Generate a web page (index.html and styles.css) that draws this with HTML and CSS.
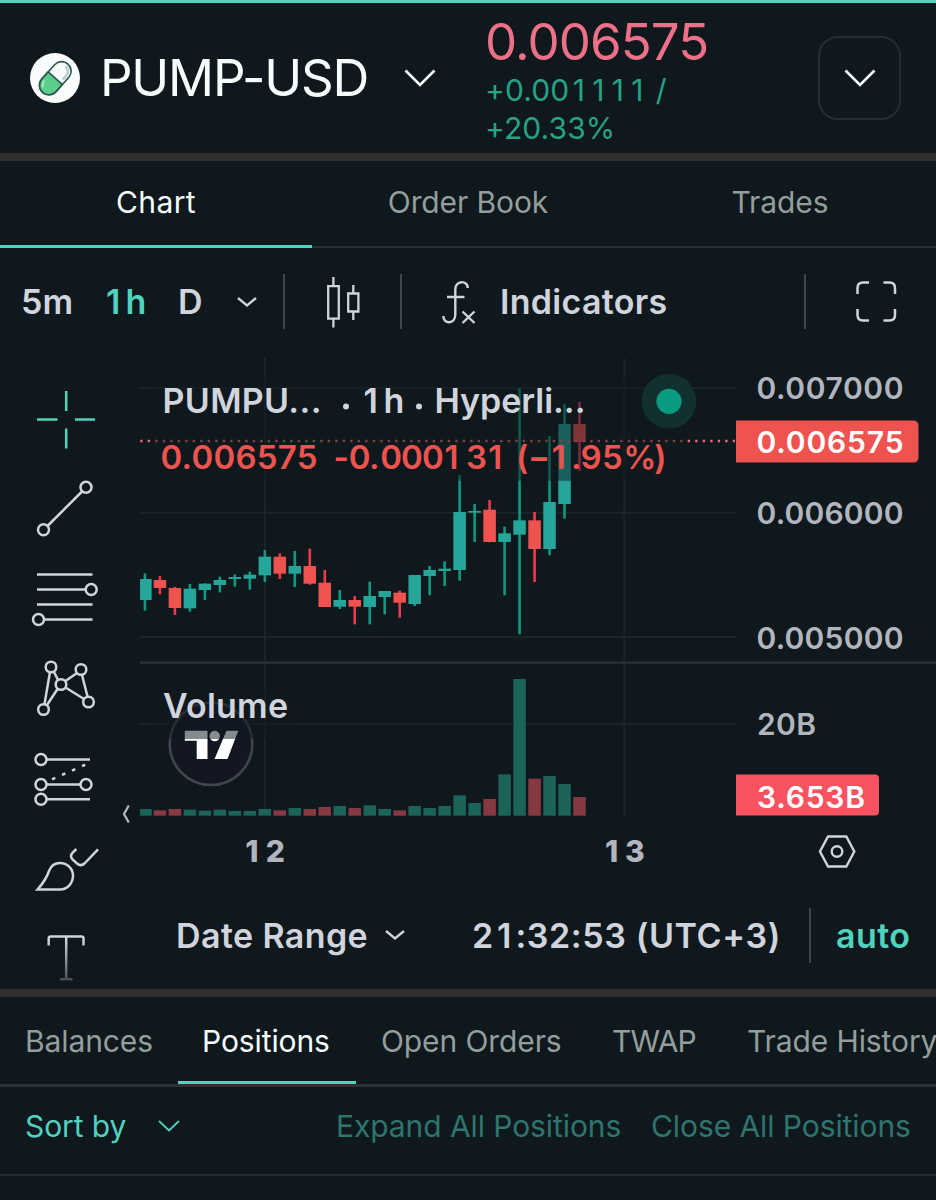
FILE: index.html
```html
<!DOCTYPE html>
<html lang="en">
<head>
<meta charset="utf-8">
<title>PUMP-USD</title>
<link rel="stylesheet" href="styles.css">
</head>
<body>
<div class="app">
  <header class="market">
    <svg class="coin" viewBox="0 0 50 50">
      <circle cx="25" cy="25" r="25" fill="#fbfdfd"/>
      <g transform="translate(25.3 25.2) rotate(-48)">
        <rect x="-19" y="-9.5" width="38" height="19" rx="9.5" fill="#f6fafa" stroke="#2c5450" stroke-width="1.6"/>
        <path d="M0-9.5H-9.5a9.5 9.5 0 0 0 0 19H0z" fill="#5cce8c" stroke="#2c5450" stroke-width="1.6"/>
        <path d="M4 6.5H9a7 7 0 0 0 7-7" fill="none" stroke="#bccdd0" stroke-width="2.6"/>
        <path d="M-15-3A7 7 0 0 1-9-6.5" fill="none" stroke="#9be8b9" stroke-width="2"/>
      </g>
    </svg>
    <h1 class="pair">PUMP-USD</h1>
    <svg class="pair-arrow" viewBox="0 0 32 18"><path d="M1.5 1.5 16 16 30.500 1.5"/></svg>
    <div class="quote">
      <div class="price">0.006575</div>
      <div class="change"><span>+0.00<span class="ones">1111</span> /</span><br><span>+20.33%</span></div>
    </div>
    <button class="more"><svg viewBox="0 0 32 18"><path d="M1.500 1.500 16 16 30.500 1.500"/></svg></button>
  </header>

  <nav class="views">
    <a class="view active">Chart</a>
    <a class="view">Order Book</a>
    <a class="view">Trades</a>
  </nav>

  <section class="chart">
    <div class="toolbar">
      <span class="tf m5">5m</span>
      <span class="tf h1 on"><span class="one">1</span>h</span>
      <span class="tf d1">D</span>
      <svg class="tf-arrow" viewBox="0 0 20 10"><path d="M1 1 10 8.500 19 1"/></svg>
      <i class="rule r1"></i>
      <svg class="candles-icon" viewBox="326 275 36 52"><path d="M333.400 276v8M333.400 318.500v8M328.200 285.200h10.600v32.500h-10.600zM353.300 284v7.500M353.300 311v8M348.200 292.500h10.200v18h-10.200z"/></svg>
      <i class="rule r2"></i>
      <svg class="fx-icon" viewBox="440 276 38 48"><path d="M443.300 314c0 8.500 12 8.500 12-1.500V287.500c0-9.500 12.500-9.500 12.500-1.500M447 295h17.500M462.500 309.500l12 11.500M474.500 309.500l-12 11.500"/></svg>
      <span class="indicators">Indicators</span>
      <i class="rule r3"></i>
      <svg class="full-icon" viewBox="855 280 43 43"><path d="M857.500 294v-6q0-5.500 5.500-5.500h6M883.500 282.500h6q5.500 0 5.500 5.500v6M895 309v6q0 5.500-5.500 5.500h-6M869 320.500h-6q-5.500 0-5.500-5.500v-6"/></svg>
    </div>

    <div class="workspace">
      <div class="tools">
        <svg class="tool on" viewBox="0 375 120 90"><path d="M66.200 391v20M66.200 428.500v20M37 419.500h20.500M75 419.500h20"/></svg>
        <svg class="tool" viewBox="0 465 120 90"><path d="M47.500 526 82 491.500"/><circle cx="43.500" cy="529.800" r="5.500"/><circle cx="86" cy="487.200" r="5.500"/></svg>
        <svg class="tool" viewBox="0 555 120 90"><path d="M37 574.500h55.500M37 589.500h48.500M37 604.500h55.500M44 619.500h48.500"/><circle cx="91.200" cy="589.500" r="5.500"/><circle cx="38.500" cy="619.500" r="5.500"/></svg>
        <svg class="tool" viewBox="0 645 120 90"><path d="M50 672 44.500 704M54 672l4 8M65.500 681 77 673M57.500 689 47 705M65.500 687.500 84 699M82 675l5.500 21.500"/><circle cx="51" cy="667" r="5.300"/><circle cx="81" cy="669.500" r="5.300"/><circle cx="61" cy="684.500" r="5.300"/><circle cx="43.500" cy="709.500" r="5.300"/><circle cx="88.500" cy="702" r="5.300"/></svg>
        <svg class="tool" viewBox="0 735 120 90"><path d="M46.500 759.500H90M46.500 784.500h34M46.500 799.300H90"/><path d="M52 779.300 87 764" stroke-dasharray="3.600 7.300"/><circle cx="41" cy="759.500" r="5.500"/><circle cx="41" cy="784.500" r="5.500"/><circle cx="86" cy="784.500" r="5.500"/><circle cx="41" cy="799.300" r="5.500"/></svg>
        <svg class="tool" viewBox="0 825 120 90"><path d="M37.500 889.500H60c7.500 0 13-6.500 13-14 0-7-6-12.500-13-12.500-5.500 0-9 3-10.800 7.500-2.700 8-7.200 14-11.700 19zM76.300 849l-3.800 3.800q-3 3.200 0 6.500l4.500 4.200q4 3.500 8-.5L98 849.300"/></svg>
        <svg class="tool last" viewBox="0 915 120 74">
          <defs><linearGradient id="fade" gradientUnits="userSpaceOnUse" x1="0" y1="940" x2="0" y2="982"><stop offset="0" stop-color="#d1d4dc"/><stop offset="1" stop-color="#42454e"/></linearGradient></defs>
          <path stroke="url(#fade)" d="M48.700 945.500v-7q0-2 2-2h30.800q2 0 2 2v7M66.200 937v42M60 979.200h12.500"/>
        </svg>
      </div>

      <svg id="plot" class="plot" viewBox="120 357 816 530">
        <g stroke="#1b2529" stroke-width="2">
          <path d="M140 388h596M140 512.800h596M140 637h596M140 723.700h596M265 358v457.500M624.300 358v457.500"/>
        </g>
        <path d="M140 662.600h796" stroke="#2e3138" stroke-width="2.200"/>
        <circle cx="211" cy="743.800" r="41.300" fill="#131722" stroke="#42454d" stroke-width="2.500"/>
        <g fill="#fff">
          <path d="M184.800 730.800h22.700V759H196.700V740.800H184.800z"/>
          <circle cx="214.700" cy="736" r="5.200"/>
          <path d="M226.500 730.800h11.800L227.500 759h-13z"/>
        </g>
        <g id="volume"></g>
        <g id="candles"></g>
        <path d="M140.200 441H735" stroke="#ee6a6f" stroke-width="2.400" stroke-dasharray="2.400 5.100"/>
        <path d="M152 375h533v105.700H152z" fill="#0e181d" opacity=".5"/>
        <path d="M152 688h145v51H152z" fill="#0e181d" opacity=".5"/>
        <circle cx="669" cy="401.300" r="27.300" fill="#12302f"/>
        <circle cx="669" cy="401.300" r="12.600" fill="#0a9b80"/>
        <g class="legend">
          <text x="162.500" y="413" textLength="159">PUMPU...</text>
          <circle cx="346" cy="406.500" r="3"/>
          <text x="363.500 383.500" y="413">1h</text>
          <circle cx="419" cy="406.500" r="3"/>
          <text x="434.500" y="413" textLength="151">Hyperli...</text>
          <text x="163" y="718" textLength="125">Volume</text>
        </g>
        <g class="legend down">
          <text x="160.500" y="469" textLength="157">0.006575</text>
          <text x="333.500 348.700 369 380.200 401 422 444.500 466 488.300" y="469">-0.000131</text>
          <text x="516 528 551.800 571 580.500 602 623.300 654.300" y="469">(−1.95%)</text>
        </g>
        <path d="M736 420.400h177q5.500 0 5.500 5.500v31q0 5.500-5.500 5.500H736z" fill="#ef534f"/>
        <path d="M736 774.600h139q4 0 4 4v33q0 4-4 4H736z" fill="#f7525f"/>
        <g class="axis">
          <text x="756.500" y="399.300" textLength="147">0.007000</text>
          <text x="756.500" y="524" textLength="147">0.006000</text>
          <text x="756.500" y="648.500" textLength="147">0.005000</text>
          <text x="757" y="734.500" textLength="59">20B</text>
          <text class="tag" x="756.500" y="453" textLength="147">0.006575</text>
          <text class="tag" x="757" y="807.500" textLength="108">3.653B</text>
          <text class="day" x="245.300 265.800" y="862">12</text>
          <text class="day" x="605 625" y="862">13</text>
        </g>
        <path d="M128.800 805.500 124 814l4.800 8.500" fill="none" stroke="#b2b5be" stroke-width="2.300"/>
        <g fill="none" stroke="#d1d4dc" stroke-width="2.400"><path d="M828 836.500h18.300l8 15-8 15H828l-8-15z"/><circle cx="837" cy="851.500" r="5.300"/></g>
      </svg>

      <div class="footer">
        <span class="range">Date Range</span>
        <svg class="tf-arrow" viewBox="0 0 20 10"><path d="M1 1 10 8.500 19 1"/></svg>
        <span class="clock">2<span class="mid">1</span>:32:53 (UTC+3)</span>
        <i class="rule r4"></i>
        <span class="auto">auto</span>
      </div>
    </div>
  </section>

  <nav class="account">
    <a class="tab t1">Balances</a>
    <a class="tab t2 active">Positions</a>
    <a class="tab t3">Open Orders</a>
    <a class="tab t4">TWAP</a>
    <a class="tab t5">Trade History</a>
  </nav>
  <div class="actions">
    <span class="sort">Sort by</span>
    <svg class="sort-arrow" viewBox="0 0 22 12"><path d="M1 1 11 10.500 21 1"/></svg>
    <span class="bulk expand">Expand All Positions</span>
    <span class="bulk close">Close All Positions</span>
  </div>
</div>
<script src="chart.js"></script>
</body>
</html>
```
FILE: styles.css
```css
* { box-sizing: border-box; }
body { margin: 0; background: #0e181d; color: #f6fefd; font-family: Inter, "Liberation Sans", sans-serif; }
.app { width: 936px; height: 1200px; overflow: hidden; border-top: 3px solid #4fd3be; background: #0e181d; }
svg { display: block; flex: none; fill: none; }
span, a, h1 { white-space: nowrap; }

.market { height: 158px; display: flex; align-items: center; padding: 0 35px 0 30px; border-bottom: 8px solid #303030; }
.coin { width: 50px; height: 50px; }
.pair { margin: 0 0 0 20px; width: 283px; font-size: 51px; font-weight: 400; letter-spacing: -1.2px; line-height: 60px; }
.pair-arrow, .more svg { width: 32px; height: 18px; stroke: #f6fefd; stroke-width: 2.6; }
.pair-arrow { margin-left: 21px; }
.quote { margin-left: 49px; width: 333px; padding-top: 6px; }
.price { height: 51px; line-height: 51px; margin-bottom: 4px; font-size: 51px; color: #ed7088; letter-spacing: -0.9px; }
.change { font-size: 30px; line-height: 38px; color: #27a284; letter-spacing: 0.1px; }
.ones { margin-left: 3.6px; margin-right: -3.6px; letter-spacing: 7.3px; }
.more { width: 83px; height: 84px; flex: none; display: flex; align-items: center; justify-content: center; padding: 0; border: 2px solid #232e32; border-radius: 20px; background: none; }

.views { height: 87px; display: grid; grid-template-columns: repeat(3, 1fr); border-bottom: 2px solid #292f32; }
.view { height: 87px; padding-top: 21px; text-align: center; font-size: 30px; line-height: 40px; letter-spacing: -0.1px; color: #949e9c; }
.view.active { color: #f6fefd; letter-spacing: 0.4px; border-bottom: 3px solid #50d2c1; }

.chart { height: 749px; border-bottom: 8px solid #303030; }
.toolbar { height: 107px; margin-bottom: 2px; display: flex; align-items: center; padding-left: 21px; font-size: 34px; font-weight: 600; color: #d1d4dc; }
.tf { flex: none; }
.m5 { width: 85px; }
.h1 { width: 72px; }
.one { letter-spacing: 5px; }
.d1 { width: 59px; }
.on { color: #50d2bd; }
.tf-arrow { width: 20px; height: 10px; stroke: #d1d4dc; stroke-width: 2.3; }
.rule { width: 2px; height: 55px; flex: none; background: #42464c; }
.r1 { margin-left: 26px; }
.candles-icon { margin-left: 41px; width: 36px; height: 52px; stroke: #d1d4dc; stroke-width: 2.3; }
.r2 { margin-left: 38px; }
.fx-icon { margin-left: 38px; width: 38px; height: 48px; stroke: #d1d4dc; stroke-width: 2.4; }
.indicators { margin-left: 22px; width: 304px; letter-spacing: 0.3px; }
.full-icon { margin-left: 49px; width: 43px; height: 43px; stroke: #d1d4dc; stroke-width: 2.5; }

.workspace { height: 632px; display: grid; grid-template-columns: 120px 1fr; grid-template-rows: 530px 1fr; }
.tools { grid-row: 1 / 3; padding-top: 18px; background: linear-gradient(#0e181d 88%, #11161f); }
.tool { width: 120px; height: 90px; stroke: #d1d4dc; stroke-width: 2.5; }
.tool.on { stroke: #50d2bd; }
.tool.last { height: 74px; }
.plot { width: 816px; height: 530px; }
.legend { font-size: 34px; font-weight: 600; fill: #d1d4dc; }
.legend.down { font-size: 33px; fill: #ef534f; }
.axis { font-size: 30px; font-weight: 600; fill: #b2b5be; }
.axis .tag { fill: #fff; }
.axis .day { font-weight: 800; }

.footer { display: flex; align-items: center; height: 96px; padding-left: 56px; font-size: 34px; font-weight: 600; color: #d1d4dc; }
.range { width: 209px; letter-spacing: 0.4px; }
.clock { margin-left: 67px; width: 337px; letter-spacing: 0.6px; }
.mid { padding: 0 3.3px; }
.auto { margin-left: 25px; color: #50d2bd; letter-spacing: 0.4px; }

.account { height: 90px; display: flex; border-bottom: 3px solid #2c3234; }
.tab { flex: none; height: 87px; padding: 24px 25px 0; font-size: 30px; line-height: 40px; letter-spacing: -0.1px; color: #949e9c; }
.tab.active { color: #f6fefd; border-bottom: 3px solid #50d2c1; }
.t1 { width: 178px; }
.t2 { width: 178px; padding-left: 24px; }
.t3 { width: 231px; }
.t4 { width: 135px; letter-spacing: -0.8px; }
.actions { height: 89px; display: flex; align-items: center; padding: 0 0 9px 25px; border-bottom: 2px solid #252c30; font-size: 30px; letter-spacing: -0.08px; }
.sort { width: 133px; color: #50d2c1; }
.sort-arrow { width: 22px; height: 12px; stroke: #50d2c1; stroke-width: 1.8; }
.bulk { color: #2f746d; }
.expand { margin-left: 156px; width: 315px; }
```
FILE: chart.js
```js
// Each row: direction, wick top, wick bottom, body top, body bottom, volume top.
// Prices are in thirds of a pixel below y=360, volumes below y=660.
const rows = [
  ['g',640,752,657,720,447],['r',648,703,660,684,451],['r',681,765,684,744,447],
  ['g',672,755,686,745,449],['g',670,720,671,690,452],['g',650,697,660,675,449],
  ['g',643,680,651,657,453],['g',635,689,644,656,453],['g',570,666,590,646,447],
  ['r',580,657,590,641,451],['g',573,681,618,641,444],['r',566,674,618,671,447],
  ['r',630,741,668,741,441],['g',690,747,720,740,438],['r',708,793,720,740,444],
  ['g',665,793,708,741,436],['g',693,763,693,711,447],['r',692,773,698,728,451],
  ['g',645,738,645,732,438],['g',618,706,630,648,444],['g',604,678,626,633,438],
  ['g',345,662,456,630,406],['g',432,546,453,458,429],['r',420,547,449,546,417],
  ['g',500,706,520,546,343],['g',85,823,481,524,57],['r',456,666,481,567,356],
  ['g',228,586,426,567,348],['g',132,476,192,432,372],['r',126,333,192,246,411]
];
const NS = 'http://www.w3.org/2000/svg';
function bar(parent, cx, w, top, bottom, color) {
  const r = document.createElementNS(NS, 'rect');
  r.setAttribute('x', cx - w / 2);
  r.setAttribute('y', top);
  r.setAttribute('width', w);
  r.setAttribute('height', bottom - top);
  r.setAttribute('fill', color);
  parent.appendChild(r);
}
const candles = document.getElementById('candles');
const volume = document.getElementById('volume');
rows.forEach(([dir, high, low, top, bottom, vol], i) => {
  const cx = 144.95 + 14.985 * i;
  const x = cx + (i ? 0 : 0.9);
  const w = i ? 12.5 : 11.6;
  const up = dir === 'g';
  bar(candles, cx, 2.6, 360 + high / 3, 360 + low / 3, up ? '#109880' : '#ec3b50');
  bar(candles, x, w, 360 + top / 3, 360 + bottom / 3, up ? '#26a69a' : '#ef5350');
  bar(volume, x, w, 660 + vol / 3, 815.7, up ? '#1c6359' : '#873942');
});
```
